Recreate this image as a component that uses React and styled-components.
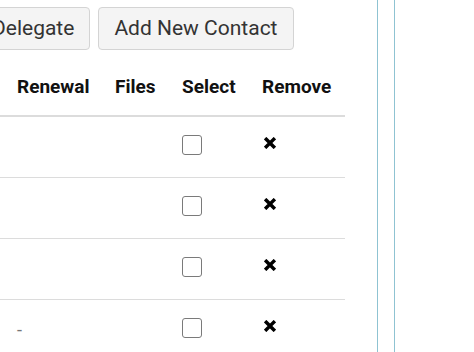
import React from "react";
import styled, { createGlobalStyle } from "styled-components";

const GlobalStyle = createGlobalStyle`
  html, body {
    margin: 0;
    padding: 0;
    background: #fff;
    font-family: Roboto, "Liberation Sans", sans-serif;
  }
  *, *::before, *::after {
    box-sizing: border-box;
  }
`;

const Layout = styled.div`
  display: flex;
  height: 100vh;
  overflow: hidden;
`;

const Main = styled.div`
  width: 378px;
  flex: none;
  border-right: 1px solid #8fc3d2;
  overflow: hidden;
`;

const Sidebar = styled.div`
  flex: 1;
  margin-left: 16px;
  border-left: 1px solid #8fc3d2;
`;

const Toolbar = styled.div`
  display: flex;
  gap: 8px;
  margin: 7px 0 0 -24px;
`;

const Button = styled.button`
  font-family: inherit;
  font-size: 21px;
  line-height: 23px;
  color: #333;
  background: #f4f4f4;
  border: 1px solid #d4d4d4;
  border-radius: 4px;
  padding: 9px 15px;
  white-space: nowrap;
`;

const Table = styled.table`
  border-collapse: collapse;
  margin: 10px 0 0 -40px;
  width: 385px;
  table-layout: fixed;
`;

const Th = styled.th`
  width: ${(p) => p.$w}px;
  text-align: left;
  font-size: 19px;
  font-weight: 700;
  color: #111;
  padding: 13px 8px 15px;
  line-height: 27px;
  border-bottom: 2px solid #dcdcdc;
`;

const Td = styled.td`
  height: 61px;
  padding: 0 8px;
  vertical-align: middle;
  border-top: ${(p) => (p.$first ? "none" : "1px solid #dcdcdc")};
  font-size: 18px;
  color: #777;
`;

const Check = styled.span`
  display: block;
  width: 20px;
  height: 20px;
  margin-top: -3px;
  border: 1.5px solid #7a7a7a;
  border-radius: 3px;
  background: #fff;
`;

const Remove = styled.svg`
  display: block;
  margin: -7px 0 0 2px;
`;

const TimesIcon = () => (
  <Remove width="12" height="12" viewBox="0 0 12 12">
    <path
      d="M2.3 2.3 L9.7 9.7 M9.7 2.3 L2.3 9.7"
      stroke="#000"
      strokeWidth="3.4"
      strokeLinecap="square"
    />
  </Remove>
);

const rows = [
  { renewal: "" },
  { renewal: "" },
  { renewal: "" },
  { renewal: "-" },
];

export default function App() {
  return (
    <>
      <GlobalStyle />
      <Layout>
        <Main>
          <Toolbar>
            <Button>Delegate</Button>
            <Button>Add New Contact</Button>
          </Toolbar>
          <Table>
            <thead>
              <tr>
                <Th $w={49}></Th>
                <Th $w={98}>Renewal</Th>
                <Th $w={67}>Files</Th>
                <Th $w={80}>Select</Th>
                <Th $w={91}>Remove</Th>
              </tr>
            </thead>
            <tbody>
              {rows.map((r, i) => (
                <tr key={i}>
                  <Td $first={i === 0}></Td>
                  <Td $first={i === 0}>{r.renewal}</Td>
                  <Td $first={i === 0}></Td>
                  <Td $first={i === 0}>
                    <Check />
                  </Td>
                  <Td $first={i === 0}>
                    <TimesIcon />
                  </Td>
                </tr>
              ))}
            </tbody>
          </Table>
        </Main>
        <Sidebar />
      </Layout>
    </>
  );
}
